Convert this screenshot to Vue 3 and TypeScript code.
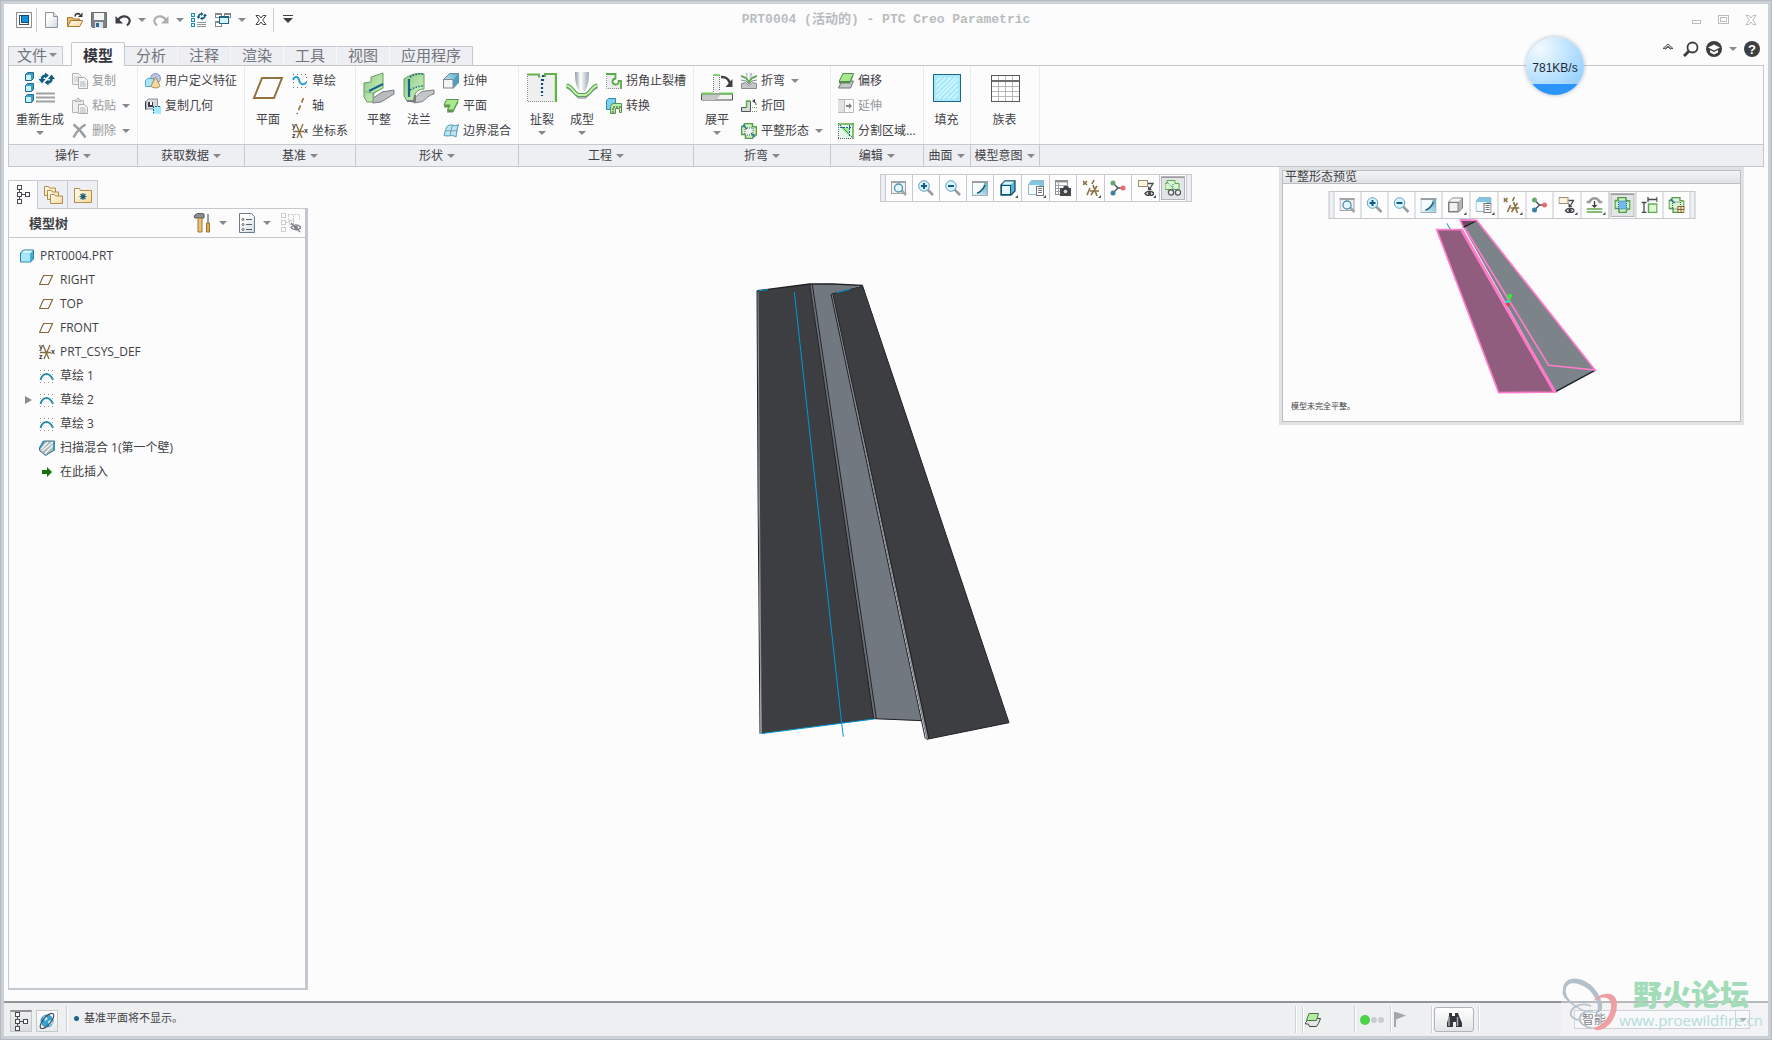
<script setup lang="ts">
import { h, ref } from 'vue'

interface Command {
  icon: string
  label: string
  menu?: boolean
  disabled?: boolean
}

interface Group {
  title: string
  large: Command[]
  small: Command[]
}

interface ViewTool {
  icon: string
  label: string
  menu?: boolean
  active?: boolean
}

interface TreeNode {
  icon: string
  label: string
  root?: boolean
  expandable?: boolean
}

interface Letter {
  text: string
  x: number
  y: number
  size: number
  fill: string
}

const letters: Record<string, Letter[]> = {
  csys: [
    { text: 'y', x: 0, y: 5, size: 7, fill: '#33363a' },
    { text: 'x', x: 12, y: 10, size: 7, fill: '#33363a' },
    { text: 'z', x: 0, y: 15, size: 7, fill: '#33363a' },
  ],
  help: [{ text: '?', x: 4, y: 13, size: 13, fill: '#fff' }],
}

const Icon = (props: { name: string; size?: number }) => {
  const size = props.size ?? 16
  return h('svg', { class: 'icon', width: size, height: size, 'aria-hidden': 'true' }, [
    h('use', { href: `#i-${props.name}`, width: size, height: size }),
    ...(letters[props.name] ?? []).map((l) =>
      h(
        'text',
        { x: l.x, y: l.y, fill: l.fill, 'font-size': l.size, 'font-family': 'Liberation Sans', 'font-weight': 700 },
        l.text,
      ),
    ),
  ])
}
Icon.props = ['name', 'size']

const tabs = ['模型', '分析', '注释', '渲染', '工具', '视图', '应用程序']
const activeTab = ref('模型')

const groups: Group[] = [
  {
    title: '操作',
    large: [{ icon: 'regen-l', label: '重新生成', menu: true }],
    small: [
      { icon: 'copy', label: '复制', disabled: true },
      { icon: 'paste', label: '粘贴', menu: true, disabled: true },
      { icon: 'delete', label: '删除', menu: true, disabled: true },
    ],
  },
  {
    title: '获取数据',
    large: [],
    small: [
      { icon: 'udf', label: '用户定义特征' },
      { icon: 'copygeom', label: '复制几何' },
    ],
  },
  {
    title: '基准',
    large: [{ icon: 'plane-l', label: '平面' }],
    small: [
      { icon: 'sketch', label: '草绘' },
      { icon: 'axis', label: '轴' },
      { icon: 'csys', label: '坐标系' },
    ],
  },
  {
    title: '形状',
    large: [
      { icon: 'flat-l', label: '平整' },
      { icon: 'flange-l', label: '法兰' },
    ],
    small: [
      { icon: 'extrude', label: '拉伸' },
      { icon: 'planar', label: '平面' },
      { icon: 'blend', label: '边界混合' },
    ],
  },
  {
    title: '工程',
    large: [
      { icon: 'rip-l', label: '扯裂', menu: true },
      { icon: 'form-l', label: '成型', menu: true },
    ],
    small: [
      { icon: 'corner', label: '拐角止裂槽' },
      { icon: 'convert', label: '转换' },
    ],
  },
  {
    title: '折弯',
    large: [{ icon: 'unbend-l', label: '展平', menu: true }],
    small: [
      { icon: 'bend', label: '折弯', menu: true },
      { icon: 'bendback', label: '折回' },
      { icon: 'flatpat', label: '平整形态', menu: true },
    ],
  },
  {
    title: '编辑',
    large: [],
    small: [
      { icon: 'offset', label: '偏移' },
      { icon: 'extend', label: '延伸', disabled: true },
      { icon: 'split', label: '分割区域...' },
    ],
  },
  { title: '曲面', large: [{ icon: 'fill-l', label: '填充' }], small: [] },
  { title: '模型意图', large: [{ icon: 'family-l', label: '族表' }], small: [] },
]

const baseTools: ViewTool[] = [
  { icon: 'refit', label: '重新调整' },
  { icon: 'zoomin', label: '放大' },
  { icon: 'zoomout', label: '缩小' },
  { icon: 'repaint', label: '重画' },
]

const viewTools: ViewTool[] = [
  ...baseTools,
  { icon: 'shaded', label: '显示样式', menu: true },
  { icon: 'saved', label: '已保存方向', menu: true },
  { icon: 'viewmgr', label: '视图管理器' },
  { icon: 'datum', label: '基准显示', menu: true },
  { icon: 'spin', label: '旋转中心' },
  { icon: 'annot', label: '注释显示', menu: true },
  { icon: 'flatview', label: '平整形态预览', active: true },
]

const previewTools: ViewTool[] = [
  ...baseTools,
  { icon: 'nohidden', label: '显示样式', menu: true },
  { icon: 'saved', label: '已保存方向', menu: true },
  { icon: 'datum', label: '基准显示', menu: true },
  { icon: 'spin', label: '旋转中心' },
  { icon: 'annot', label: '注释显示', menu: true },
  { icon: 'bendzone', label: '折弯区域', menu: true },
  { icon: 'flatshow', label: '显示平整', active: true },
  { icon: 'measure', label: '尺寸' },
  { icon: 'flattable', label: '平整表' },
]

const tree: TreeNode[] = [
  { icon: 'part', label: 'PRT0004.PRT', root: true },
  { icon: 'plane', label: 'RIGHT' },
  { icon: 'plane', label: 'TOP' },
  { icon: 'plane', label: 'FRONT' },
  { icon: 'csys', label: 'PRT_CSYS_DEF' },
  { icon: 'curve', label: '草绘 1' },
  { icon: 'curve', label: '草绘 2', expandable: true },
  { icon: 'curve', label: '草绘 3' },
  { icon: 'swept', label: '扫描混合 1(第一个壁)' },
  { icon: 'insert', label: '在此插入' },
]

const filter = ref('智能')
</script>

<template>
  <div class="window">
    <svg class="sprite" width="0" height="0" aria-hidden="true">
      <defs>
        <linearGradient id="g-page" x1="0" y1="0" x2="1" y2="1"><stop offset="0.3" stop-color="#fff" /><stop offset="1" stop-color="#cfd8e2" /></linearGradient>
        <linearGradient id="g-folder" x1="0" y1="0" x2="1" y2="1"><stop offset="0" stop-color="#fffdf0" /><stop offset="1" stop-color="#f6d999" /></linearGradient>
        <linearGradient id="g-green" x1="0" y1="0" x2="1" y2="1"><stop offset="0" stop-color="#8fc68a" /><stop offset="1" stop-color="#d3fbbf" /></linearGradient>
        <linearGradient id="g-blue" x1="0" y1="1" x2="1" y2="0"><stop offset="0" stop-color="#eafaff" /><stop offset="1" stop-color="#5aa9c4" /></linearGradient>
        <linearGradient id="g-steel" x1="0" y1="0" x2="1" y2="0"><stop offset="0" stop-color="#8f98a1" /><stop offset="0.4" stop-color="#fff" /><stop offset="1" stop-color="#98a7b6" /></linearGradient>
      </defs>

      <symbol id="i-app" viewBox="0 0 16 16"><rect x="0.500" y="0.500" width="15" height="15" fill="#fff" stroke="#8e8f92" /><rect x="3.500" y="3.500" width="9" height="9" fill="#fff" stroke="#4e5156" /><rect x="5.500" y="3.500" width="7" height="7" fill="#1292dc" stroke="#0a4f7c" /></symbol>
      <symbol id="i-new" viewBox="0 0 16 16"><path d="M2.500 0.500h8l4 4v11h-12z" fill="url(#g-page)" stroke="#8b9299" /><path d="M10.500 0.500v4h4" fill="#e6eaee" stroke="#8b9299" /></symbol>
      <symbol id="i-open" viewBox="0 0 16 16"><path d="M0.500 14.500v-9h5l1 1.500h6v3" fill="#e9bd6d" stroke="#a5792f" /><path d="M0.700 14.500l3-6h12l-3 6z" fill="url(#g-folder)" stroke="#a5792f" /><path d="M8 4.500c0-3 3-3.500 5-2" fill="none" stroke="#33373b" stroke-width="1.600" /><path d="M15.500 0.500v4.500h-4.500z" fill="#33373b" /></symbol>
      <symbol id="i-save" viewBox="0 0 16 16"><path d="M0.500 0.500h15v15h-14l-1-1z" fill="#7d8287" stroke="#6a6e73" /><rect x="3" y="1" width="10" height="7" fill="#f4f6f8" /><rect x="4" y="10" width="8" height="6" fill="#dfe4e8" /><rect x="5" y="11" width="3" height="4" fill="#2d6f91" /></symbol>
      <symbol id="i-undo" viewBox="0 0 16 16"><path d="M3 8c3-4.500 8-4.500 10.500-2 2 2.200 1.500 5-1.500 7.500" fill="none" stroke="#3c3f44" stroke-width="2.200" /><path d="M0.500 4v7.500h7.500z" fill="#3c3f44" /></symbol>
      <symbol id="i-redo" viewBox="0 0 16 16"><path d="M13 8c-3-4.500-8-4.500-10.500-2-2 2.200-1.500 5 1.500 7.500" fill="none" stroke="#adafb2" stroke-width="2.200" /><path d="M15.500 4v7.500h-7.500z" fill="#adafb2" /></symbol>
      <symbol id="i-regen" viewBox="0 0 16 16"><g fill="#c8f2ff" stroke="#2a8ab0"><rect x="0.500" y="1.500" width="3" height="3" /><rect x="0.500" y="6.500" width="3" height="3" /><rect x="0.500" y="11.500" width="3" height="3" /></g><path d="M6 10.500h9M6 12.500h9M6 14.500h9" stroke="#909498" /><path d="M7.500 5c0-2 1-3 3-3M14 3c0 2-1 3.500-3 3.500" fill="none" stroke="#145b80" stroke-width="1.600" /><path d="M10 0v4l2.500-2zM11.500 4.500v4l-2.500-2zM5.500 4.500h4l-2 2.500zM12 4h4l-2-2.500z" fill="#145b80" /></symbol>
      <symbol id="i-windows" viewBox="0 0 16 16"><g fill="#fff" stroke="#85898d"><rect x="0.500" y="1.500" width="6" height="4" /><rect x="0.500" y="9.500" width="6" height="5" /><rect x="9.500" y="1.500" width="6" height="4" /></g><path d="M0.500 2h6M9.500 2h6M0.500 10h6" stroke="#85898d" stroke-width="2" /><rect x="4.500" y="4.500" width="9" height="7" fill="#d7f4ff" stroke="#1d6486" /><path d="M4 5h10" stroke="#1d6486" stroke-width="2" /></symbol>
      <symbol id="i-closebox" viewBox="0 0 16 16"><path d="M3 3.500h3l2 2.500 2-2.500h3l-3.300 4.500 3.300 4.500h-3l-2-2.500-2 2.500h-3l3.300-4.500z" fill="#fff" stroke="#43464a" /></symbol>

      <symbol id="i-regen-l" viewBox="0 0 32 32"><g stroke="#1f6b8d"><path d="M1.500 2.500l2-2h6v6l-2 2h-6zM1.500 13.500l2-2h6v6l-2 2h-6zM1.500 24.500l2-2h6v6l-2 2h-6z" fill="#3f9cc4" /></g><path d="M2 3h5v5h-5zM2 14h5v5h-5zM2 25h5v5h-5z" fill="#c8f4ff" /><path d="M12 21.500h19M12 25.500h19M12 29.500h19" stroke="#9ea1a4" stroke-width="2" /><path d="M18 8c0-3 1-4.500 4-4.500M27.500 6c0 3-1 4.500-4 4.500" fill="none" stroke="#115c82" stroke-width="2.600" /><path d="M21 0.500v6l4-3zM14.500 7h7l-3.500 4.500zM24.500 7.500v6l-4-3zM24 7h7l-3.500-4.500z" fill="#115c82" /></symbol>
      <symbol id="i-copy" viewBox="0 0 16 16"><path d="M0.500 0.500h6l3 3v8h-9z" fill="#f2f2f2" stroke="#b3b5b7" /><path d="M2 4h5M2 6h5M2 8h4" stroke="#c4c5c7" /><path d="M6.500 4.500h6l3 3v8h-9z" fill="#f4f4f4" stroke="#a9abad" /><path d="M8 9h5M8 11h6M8 13h6" stroke="#b3b4b6" /></symbol>
      <symbol id="i-paste" viewBox="0 0 16 16"><path d="M0.500 2.500h11v12h-11z" fill="#eee" stroke="#b3b5b7" /><path d="M3 3.500l2-3h2l2 3z" fill="#ddd" stroke="#b3b5b7" /><path d="M6.500 6.500h6l3 3v6h-9z" fill="#f6f6f6" stroke="#a9abad" /><path d="M8 10h5M8 12h6M8 14h6" stroke="#b3b4b6" /></symbol>
      <symbol id="i-delete" viewBox="0 0 16 16"><path d="M1.500 1.500c4 3 8 7 12 13M13.500 1.500c-5 3-9 7-12 13" fill="none" stroke="#9b9da0" stroke-width="2.400" /></symbol>
      <symbol id="i-udf" viewBox="0 0 16 16"><circle cx="10.500" cy="5.500" r="5" fill="#b7c6ea" stroke="#8393bd" /><path d="M0.500 7.500l2-2h6v6l-2 2h-6z" fill="#a6e6fb" stroke="#5aa8c5" /><path d="M10.500 4l4.500 9c-1 2.500-8 2.500-9 0z" fill="#f4d9a2" stroke="#b08a4c" /></symbol>
      <symbol id="i-copygeom" viewBox="0 0 16 16"><path d="M0.500 3.500l3-2.500h9v7l-3 3h-9z" fill="#d7d9dc" stroke="#8a8e92" /><path d="M0.500 3.500v8" stroke="#3b3f43" stroke-width="1.500" /><rect x="3" y="4" width="5" height="5" fill="#3b3f43" /><rect x="5" y="4" width="2" height="3" fill="#fff" /><rect x="8" y="8" width="8" height="8" fill="#a6e9ff" /><path d="M8.500 8v7M10 8.500h5" stroke="#1d6486" stroke-dasharray="2 1" /></symbol>
      <symbol id="i-plane-l" viewBox="0 0 32 32"><path d="M10 6h20l-8 20h-20z" fill="none" stroke="#8f7340" stroke-width="2" /></symbol>
      <symbol id="i-plane" viewBox="0 0 16 16"><path d="M4.500 3.500h9l-4 9h-9z" fill="none" stroke="#83693b" stroke-width="1.200" /></symbol>
      <symbol id="i-sketch" viewBox="0 0 16 16"><path d="M1 1.500h14M1 14.500h14M1.500 5v7M14.500 4v8" stroke="#6c7074" stroke-dasharray="1 3" /><path d="M1 7c1.500-4 5-4 6 0s3.500 6 7.500 2.500" fill="none" stroke="#2d9fd2" stroke-width="2" /></symbol>
      <symbol id="i-axis" viewBox="0 0 16 16"><path d="M11.500 0L5 16" stroke="#8f7340" stroke-width="1.600" stroke-dasharray="5 3" /></symbol>
      <symbol id="i-csys" viewBox="0 0 16 16"><path d="M1 8.500h11M4 1l6 14M11 1L5 15" stroke="#866d3e" stroke-width="1.300" /></symbol>
      <symbol id="i-flat-l" viewBox="0 0 32 32"><path d="M9 27l10-7 12-2v4l-13 8-8 1z" fill="#b9bcbe" stroke="#797d80" /><path d="M1 11l7-1v-5l12-4v15l-9 5-1 9h-6l-3-5z" fill="url(#g-green)" stroke="#6a9b66" /><path d="M1.500 19c2 1 4 2 8.500 2l10-5M10 21v9" fill="none" stroke="#86b382" stroke-width="1.200" /><path d="M6 19l14-7" stroke="#16638c" stroke-width="2" /></symbol>
      <symbol id="i-flange-l" viewBox="0 0 32 32"><path d="M9 27c5-1 7-8 13-8l9-1v4c-7 1-9 8-14 8l-6 1z" fill="#c4c7c9" stroke="#797d80" /><path d="M1 7c7-5 12-6 20-5v15c-8 0-10 6-11 13l-6-1-3-5z" fill="url(#g-green)" stroke="#6a9b66" /><path d="M6 7v18" stroke="#16638c" stroke-width="2.200" /><path d="M7 5c5-3 9-3.500 14-3M7 18c5-3 9-4 14-4" stroke="#16638c" fill="none" stroke-width="1.500" stroke-dasharray="1.500 1.500" /><path d="M4 29h8v-6" fill="none" stroke="#797d80" stroke-width="2" /></symbol>
      <symbol id="i-extrude" viewBox="0 0 16 16"><path d="M0.500 6.500l6-6h9v9l-5 5.500z" fill="url(#g-blue)" stroke="#6b8c9c" /><path d="M10 7l5.500-6.500v9l-5 5.500z" fill="#4c9fc0" /><rect x="0.500" y="6.500" width="9.500" height="8.500" fill="#f3f4f5" stroke="#84888c" /></symbol>
      <symbol id="i-planar" viewBox="0 0 16 16"><path d="M2 3h13v2l-5 9.500h-6l1-5h-4z" fill="#5c9552" /><path d="M3.500 1.500h12l-5 10.500h-6l2.500-5h-6z" fill="#a6ea8c" stroke="#5c9552" /></symbol>
      <symbol id="i-blend" viewBox="0 0 16 16"><path d="M4.500 3c4-3 7 1.500 11-1.500-1 3-2 8-2.500 12.500-4-3-8 0-12-1.500 1-3 1.500-7 3.500-9.500z" fill="#b8e8f6" stroke="#5196b2" /><path d="M9.500 2c-1 4-2 7-2.500 11M2.500 8c4-1 8 1 12-1" fill="none" stroke="#7f99a5" /></symbol>
      <symbol id="i-rip-l" viewBox="0 0 32 32"><path d="M2 3h28v27h-28z" fill="#efefef" /><path d="M1.500 4v25.500h26" fill="none" stroke="#8e9194" stroke-dasharray="1 1" /><path d="M1 2.500h12v3M19 5v-3h11v28" fill="none" stroke="#62b04f" stroke-width="2" /><path d="M28.500 3v27" stroke="#b5fba0" /><path d="M17 3v6M16 7v17" fill="none" stroke="#104e77" stroke-width="2.200" stroke-dasharray="2 2" /></symbol>
      <symbol id="i-form-l" viewBox="0 0 32 32"><path d="M9 0h14c0 8-1 14-4 19h-6c-3-5-4-11-4-19z" fill="url(#g-steel)" /><path d="M0.500 16c5 1 7 6 12 10h7c5-4 7-9 12-10" fill="none" stroke="#a0a4a8" stroke-width="1.500" /><path d="M0.500 13.500c6 1 7 8 12 9.500h7c5-1.500 6-8.500 12-9.500" fill="none" stroke="#5b9a54" stroke-width="4" /><path d="M0.500 13.500c6 1 7 8 12 9.500h7c5-1.500 6-8.500 12-9.500" fill="none" stroke="#bdf4ad" stroke-width="2" /></symbol>
      <symbol id="i-corner" viewBox="0 0 16 16"><path d="M1 1h8v4c-3 1-3 6 0 6 2 1 4-1 4-3h2v8h-14z" fill="#ececec" /><path d="M0.500 1v14.500h14" fill="none" stroke="#8e9194" stroke-dasharray="1 1" /><path d="M0 1h9.500v4.500c-4.500 1-3.500 6 0 6s3-2 3-3.500h2.500v8" fill="none" stroke="#5cab4a" stroke-width="1.800" /></symbol>
      <symbol id="i-convert" viewBox="0 0 16 16"><path d="M0.500 2.500l2-2h7v8l-2 3h-7z" fill="#79d0f4" stroke="#3189ae" /><path d="M4.500 15.500v-7l2-3h9v9h-2v-4h-4v5z" fill="#b6ef9f" stroke="#5d8f55" /><path d="M7 15v-6h8" fill="none" stroke="#3e4347" stroke-dasharray="2 1" /></symbol>
      <symbol id="i-unbend-l" viewBox="0 0 32 32"><path d="M12.500 20v-16.500h6v15" fill="#f1f1f1" stroke="#6b6f72" stroke-dasharray="1 1" /><path d="M12 3h7" stroke="#70c75c" stroke-width="1.500" /><path d="M0.500 22h31v6h-31z" fill="#f2f2f2" stroke="#4d5054" /><path d="M1 23h18c-1 3-4 5-7 5h-11z" fill="#c5c7c9" /><path d="M0.500 21.500h12M18 21.500h14" stroke="#70c75c" stroke-width="2" /><path d="M20 5c5-0.500 8 3 9 6" fill="none" stroke="#3d4145" stroke-width="2.600" /><path d="M31.500 7v8h-7z" fill="#3d4145" /></symbol>
      <symbol id="i-bend" viewBox="0 0 16 16"><path d="M4.500 0h7l-2 7h-3z" fill="url(#g-steel)" /><path d="M0 3l5 2 3 4 3-4 5-2" fill="none" stroke="#63a957" stroke-width="2" /><path d="M0 7l5 1 3 3 3-3 5-1" fill="none" stroke="#878b8f" /><path d="M0.500 15.500v-5l4-1 3.500 3 3.500-3 4 1v5z" fill="#c4c6c8" stroke="#878b8f" /></symbol>
      <symbol id="i-bendback" viewBox="0 0 16 16"><path d="M0.500 13.500v-4h5l0-6h4v10z" fill="#d7dad7" stroke="#4f5558" /><path d="M5.500 10v-7h4" fill="none" stroke="#60b24d" stroke-width="1.500" /><path d="M11 9.500h5M11 13.500h5" stroke="#5f9955" stroke-dasharray="1 1" /><path d="M12 3c2 0 3 2 3 4" fill="none" stroke="#3d4145" /><path d="M11 3l3-2v4z" fill="#3d4145" /></symbol>
      <symbol id="i-flatpat" viewBox="0 0 16 16"><path d="M3.500 0.500h8v3l4 0.500v8h-3l-1 3.500h-7v-4h-4v-8h3z" fill="#ccefc0" stroke="#549c4c" stroke-width="1.500" /><path d="M4 5h8v7h-8z" fill="#eef4ee" stroke="#4c5e5a" stroke-dasharray="1 1" /><path d="M2 2l4 4M10 10l4 4" stroke="#226fa0" stroke-width="1.400" /></symbol>
      <symbol id="i-offset" viewBox="0 0 16 16"><path d="M4 8h11.500l-3 7h-12z" fill="#c6c8ca" stroke="#6f7376" /><path d="M5 2.500h10.500l-3.500 8h-11.500z" fill="#568b4c" /><path d="M5 0.500h10.500l-3.500 8h-11z" fill="#a4e98a" stroke="#568b4c" /></symbol>
      <symbol id="i-extend" viewBox="0 0 16 16"><rect x="0" y="1" width="6" height="14" fill="#e2e2e3" /><path d="M0 1.500h15.500v13h-15.500M6.500 1v14" fill="none" stroke="#b8babc" /><path d="M8 8h3" stroke="#808386" stroke-width="2" /><path d="M11 5v6l3-3z" fill="#808386" /></symbol>
      <symbol id="i-split" viewBox="0 0 16 16"><rect x="1" y="1" width="14" height="14" fill="#e4f7ef" /><path d="M3 5h8v8z" fill="#a4e98a" /><path d="M0.500 0v16M0 15.500h16" stroke="#55595c" stroke-dasharray="1 1" /><path d="M0 1h16M15 0v16" stroke="#5cab4a" stroke-width="1.500" /><path d="M2 4.500h12M11.500 2v12M2 2l12 12" stroke="#1e6187" fill="none" stroke-dasharray="2 1" /></symbol>
      <symbol id="i-fill-l" viewBox="0 0 32 32"><rect x="2.500" y="2.500" width="27" height="27" fill="#a5e8fb" stroke="#1f6788" /><path d="M5 10L10 5M5 15L15 5M5 20L20 5M5 25L25 5M7 27L27 7M12 27L27 12M17 27L27 17M22 27L27 22" stroke="#d5f7ff" stroke-width="1.500" /></symbol>
      <symbol id="i-family-l" viewBox="0 0 32 32"><rect x="2.500" y="3.500" width="28" height="26" fill="#fff" stroke="#55585c" /><path d="M9.500 4v25M16.500 4v25M23.500 4v25M3 14.500h27M3 19.500h27M3 24.500h27" stroke="#b6b8ba" /><path d="M3 9h27" stroke="#6c6f72" stroke-width="2" /></symbol>

      <symbol id="i-treetab" viewBox="0 0 16 20"><g fill="#fff" stroke="#484b4f"><path d="M4.500 5v10M6 9.500h4" /><rect x="2.500" y="0.500" width="4" height="4" /><rect x="2.500" y="7.500" width="4" height="4" /><rect x="2.500" y="14.500" width="4" height="4" /><rect x="10.500" y="7.500" width="4" height="4" /></g></symbol>
      <symbol id="i-folders" viewBox="0 0 20 20"><g fill="url(#g-folder)" stroke="#b08d4f"><path d="M1.500 10.500v-9h4l1 1.500h6v7.500z" /><path d="M4.500 14.500v-9h4l1 1.500h6v7.500z" /><path d="M7.500 18.500v-9h4l1 1.500h7v7.500z" /></g></symbol>
      <symbol id="i-favorite" viewBox="0 0 20 20"><path d="M1.500 17.500v-14h5l1 2h11v12z" fill="url(#g-folder)" stroke="#b08d4f" /><path d="M10 8v7M6.500 11.500h7M7.500 9l5 5M12.500 9l-5 5" stroke="#165d7c" stroke-width="1.200" /></symbol>
      <symbol id="i-tools" viewBox="0 0 20 20"><path d="M2 2c2-2 6-2 9-1v4h-9l-1-1z" fill="#8a8f96" stroke="#55585e" /><path d="M5 5h4v14h-4z" fill="#e8c47c" stroke="#9c7433" /><path d="M15 1v9" stroke="#7d8288" stroke-width="1.500" /><path d="M13.500 10h3v9h-3z" fill="#e1a64f" stroke="#9c7433" /></symbol>
      <symbol id="i-list" viewBox="0 0 20 20"><path d="M2.500 0.500h12l3 3v16h-15z" fill="url(#g-page)" stroke="#6e7d8c" /><path d="M9 6.500h6M9 11.500h6M9 16.500h6" stroke="#5b6066" /><g fill="#fff" stroke="#5b6066"><circle cx="6" cy="6.500" r="1" /><circle cx="6" cy="11.500" r="1" /><circle cx="6" cy="16.500" r="1" /></g></symbol>
      <symbol id="i-treehide" viewBox="0 0 20 20"><g fill="#fff" stroke="#cbcdcf"><rect x="0.500" y="0.500" width="4" height="4" /><rect x="0.500" y="7.500" width="4" height="4" /><rect x="0.500" y="14.500" width="4" height="4" /><path d="M5 9.500h4M7.500 2v7M7 1.500h12M12.500 2v5M18.500 2v6" stroke-dasharray="2 1" /><rect x="8.500" y="7.500" width="4" height="4" /></g><path d="M10 14.500c3-3.500 7-3.500 10 0-3 3-7 3-10 0zM10 10l9 9" fill="none" stroke="#7e8184" stroke-width="1.300" /><circle cx="15" cy="14.500" r="2" fill="#7e8184" /></symbol>
      <symbol id="i-part" viewBox="0 0 16 16"><path d="M1.500 5l3-3h10v9l-3 3h-10z" fill="#43b0d6" stroke="#2d7f9c" /><path d="M2 5.500l3-3h9l-3 3z" fill="#d8f7ff" /><rect x="2" y="5.500" width="9" height="8" fill="#a8e8fb" /></symbol>
      <symbol id="i-curve" viewBox="0 0 16 16"><path d="M1 2.500h14M1 14.500h14M1.500 6v6M13.500 6v6" stroke="#8a8d90" stroke-dasharray="1 3" /><path d="M1.500 12c1-3.500 3-6 6-6s5 2.500 6.500 6" fill="none" stroke="#2b8bb5" stroke-width="1.900" /></symbol>
      <symbol id="i-swept" viewBox="0 0 16 16"><path d="M0.500 8l4-7h11v9l-9 5.500-6-5z" fill="#aeb6ba" stroke="#35718b" /><path d="M3 11L14 2M6 13.500L14.500 5M2 9l7-7" stroke="#f5f6f6" stroke-width="1.400" /><path d="M1 8l3.500-6.500M15 1.500v9" fill="none" stroke="#2e97c2" stroke-width="1.800" /></symbol>
      <symbol id="i-insert" viewBox="0 0 16 16"><path d="M3 6h5v-3l5 5-5 5v-3h-5z" fill="#15720d" /></symbol>

      <symbol id="i-refit" viewBox="0 0 16 16"><rect x="0.500" y="1.500" width="14" height="12" fill="#f1f1f2" stroke="#a2a4a7" /><path d="M0 2h15" stroke="#a2a4a7" stroke-width="2" /><path d="M10 10l5 5" stroke="#a3a5a7" stroke-width="2.500" /><circle cx="7.500" cy="8" r="4" fill="#e2f7ff" stroke="#4f90ac" stroke-width="1.300" /></symbol>
      <symbol id="i-zoomin" viewBox="0 0 16 16"><path d="M9 9l6 6" stroke="#999c9f" stroke-width="2.500" /><circle cx="6" cy="6" r="5.300" fill="#d4f3ff" stroke="#67a3bc" /><path d="M6 3v6M3 6h6" stroke="#105f83" stroke-width="2" /></symbol>
      <symbol id="i-zoomout" viewBox="0 0 16 16"><path d="M9 9l6 6" stroke="#999c9f" stroke-width="2.500" /><circle cx="6" cy="6" r="5.300" fill="#d4f3ff" stroke="#67a3bc" /><path d="M3 6h6" stroke="#105f83" stroke-width="2" /></symbol>
      <symbol id="i-repaint" viewBox="0 0 16 16"><rect x="0.500" y="1.500" width="15" height="14" fill="url(#g-blue)" stroke="#a3adb3" /><path d="M0 2h16" stroke="#98a0a5" stroke-width="2" /><path d="M1 3h11c0 5-4 9-8 10l-3 1z" fill="#f4fcff" /><path d="M5 13c2 0 6-3 8-8" fill="none" stroke="#1e5c7b" stroke-width="1.500" /></symbol>
      <symbol id="i-shaded" viewBox="0 0 16 16"><path d="M1 5l4-4h10v10l-4 4h-10z" fill="#5fb2d0" stroke="#125070" stroke-width="1.300" /><path d="M2 4.500l3-3h9l-3 3z" fill="#d4f5ff" /><rect x="1.500" y="5.500" width="9" height="9" fill="#e4faff" stroke="#125070" /></symbol>
      <symbol id="i-nohidden" viewBox="0 0 16 16"><path d="M1 5l4-4h10v10l-4 4h-10z" fill="#b5b5b6" stroke="#7e8082" /><path d="M2 4.500l3-3h9l-3 3z" fill="#f5f5f5" /><rect x="1.500" y="5.500" width="9" height="9" fill="#f1f1f1" stroke="#7e8082" /></symbol>
      <symbol id="i-saved" viewBox="0 0 16 16"><path d="M0.500 4.500l3-4h12v9l-4 5h-11z" fill="#7fc6e2" stroke="#9ab7c4" /><path d="M1 5h10v9h-10z" fill="#f3fafc" /><rect x="8.500" y="6.500" width="7" height="9" fill="#fff" stroke="#727578" /><path d="M10 8.500h4M10 10.500h4M10 12.500h4" stroke="#727578" /></symbol>
      <symbol id="i-viewmgr" viewBox="0 0 16 16"><rect x="0.500" y="0.500" width="12" height="14" fill="#fff" stroke="#8d9093" /><path d="M0 1.500h13" stroke="#8d9093" stroke-width="2" /><path d="M3.500 3v11M1 5.500h12M1 8.500h12M1 11.500h8" stroke="#a2a5a8" /><path d="M5 8h3l1-2h4l1 2h2v8h-11z" fill="#46484b" /><circle cx="10.500" cy="11.500" r="2.500" fill="#cfd3d7" stroke="#222" /></symbol>
      <symbol id="i-datum" viewBox="0 0 16 16"><path d="M0 1l4 4M4 1L0 5M11 0L9 4M7 8L4 15M10 5l4 11M14 6L8 15M7 11h9" stroke="#8a7144" stroke-width="1.600" /></symbol>
      <symbol id="i-spin" viewBox="0 0 16 16"><path d="M3 3l5 5 6 0M8 8l-5 5" fill="none" stroke="#47505a" stroke-width="1.400" /><circle cx="3" cy="3" r="2.500" fill="#68a971" /><circle cx="13" cy="8" r="2.500" fill="#e86c6c" /><circle cx="3" cy="13" r="2.500" fill="#3a80a3" /></symbol>
      <symbol id="i-annot" viewBox="0 0 16 16"><rect x="0.500" y="0.500" width="9" height="6" fill="#fff5dc" stroke="#988e78" /><path d="M10 3.500h5l-3 5" fill="none" stroke="#44474a" stroke-width="1.300" /><path d="M10 6v4h4z" fill="#44474a" /><path d="M7 13.500c2-3 7-3 9 0-2 3-7 3-9 0z" fill="#fff" stroke="#44474a" stroke-width="1.400" /><circle cx="11.500" cy="13.500" r="1.700" fill="#44474a" /></symbol>
      <symbol id="i-flatview" viewBox="0 0 16 16"><path d="M2 0.500h8v3h4v6h-14v-6h2z" fill="#d5f5ca" stroke="#5fa855" /><path d="M2 2l6 6M8 4v5" stroke="#317da6" stroke-dasharray="1 1" /><circle cx="6" cy="12.500" r="2.600" fill="#eee" stroke="#55585a" stroke-width="1.300" /><circle cx="13" cy="12.500" r="2.600" fill="#eee" stroke="#55585a" stroke-width="1.300" /></symbol>
      <symbol id="i-bendzone" viewBox="0 0 16 16"><path d="M0 5h3c2-5 8-5 10 0h3" fill="none" stroke="#9a9d9f" stroke-width="2.500" /><path d="M8 4v5" stroke="#3c3f42" stroke-width="1.300" /><path d="M5 8h6l-3 3z" fill="#3c3f42" /><path d="M0 12h16M0 15h16" stroke="#5fa552" stroke-width="1.500" /></symbol>
      <symbol id="i-flatshow" viewBox="0 0 16 16"><path d="M3.500 0.500h8v3l4 0.500v8h-3l-1 3.500h-7v-4h-4v-8h3z" fill="#c9f1be" stroke="#549c4c" stroke-width="1.500" /><rect x="4" y="4" width="8" height="8" fill="#72b9ee" stroke="#2c709e" stroke-dasharray="1 1" /></symbol>
      <symbol id="i-measure" viewBox="0 0 16 16"><path d="M6 2.500h9M6.500 0v5M15.500 0v5M2.500 6v9M0 5.500h5M0 15.500h5" stroke="#45484b" stroke-width="1.300" /><rect x="7" y="7" width="8.500" height="8.500" fill="#dcf7d3" stroke="#5fa552" stroke-width="1.400" /></symbol>
      <symbol id="i-flattable" viewBox="0 0 16 16"><path d="M3.500 0.500h8v3l4 0.500v8h-3l-1 3.500h-7v-4h-4v-8h3z" fill="#dbf2d2" stroke="#549c4c" stroke-width="1.300" /><path d="M4 5h8v7h-8z" fill="none" stroke="#4c5e5a" stroke-dasharray="1 1" /><path d="M2 2l4 4" stroke="#226fa0" stroke-width="1.400" /><rect x="9.500" y="9.500" width="6" height="6" fill="#fce9bf" stroke="#806536" /><path d="M9 12.500h7M12.500 10v6" stroke="#806536" /></symbol>

      <symbol id="i-search" viewBox="0 0 16 16"><path d="M6 10l-5 5" stroke="#3c3e42" stroke-width="3" /><circle cx="9.500" cy="6.500" r="5" fill="#fff" stroke="#3c3e42" stroke-width="1.800" /></symbol>
      <symbol id="i-learn" viewBox="0 0 16 16"><circle cx="8" cy="8" r="8" fill="#3c3e42" /><path d="M2 6.500l6-3 6 3-6 3zM4 9l4 2 4-2v2.500l-4 2-4-2z" fill="#fff" /></symbol>
      <symbol id="i-help" viewBox="0 0 16 16"><circle cx="8" cy="8" r="8" fill="#3c3e42" /></symbol>
      <symbol id="i-collapse" viewBox="0 0 16 16"><path d="M3 7.500l5-4.500 5 4.500h-2l-3-2.500-3 2.500zM5 8.500l3-2.500 3 2.500" fill="#fff" stroke="#505357" /></symbol>
      <symbol id="i-min" viewBox="0 0 16 16"><rect x="3.500" y="8.500" width="8" height="3" fill="#fff" stroke="#b9bbbe" /></symbol>
      <symbol id="i-max" viewBox="0 0 16 16"><rect x="2.500" y="3.500" width="10" height="8" fill="#fff" stroke="#b9bbbe" /><rect x="4.500" y="5.500" width="6" height="4" fill="#fff" stroke="#b9bbbe" /></symbol>
      <symbol id="i-close" viewBox="0 0 16 16"><path d="M3 3.500h3l2 2.500 2-2.500h3l-3.300 4.500 3.300 4.500h-3l-2-2.500-2 2.500h-3l3.300-4.500z" fill="#fff" stroke="#b9bbbe" /></symbol>

      <symbol id="i-globe" viewBox="0 0 16 16"><circle cx="8" cy="8" r="6.500" fill="#37a0d0" /><path d="M4 4l3-1 2 3-3 2zM9 8l4-1 1 3-4 3z" fill="#bfe8f7" /><ellipse cx="8" cy="8" rx="9.500" ry="3.800" fill="none" stroke="#4a5158" stroke-width="1.200" transform="rotate(-50 8 8)" /></symbol>
      <symbol id="i-region" viewBox="0 0 16 16"><path d="M0.500 10.500l4-4h11l-2 5-2 3h-7l-1-2.500h-3z" fill="#e4e7e4" stroke="#3f4a42" /><path d="M4 1.500h9.500l-2 7h-10z" fill="#b4eda0" stroke="#47784a" /></symbol>
      <symbol id="i-flag" viewBox="0 0 16 16"><path d="M2 0v15" stroke="#a4a7aa" stroke-width="2" /><path d="M3 0l10 3.500-10 4z" fill="#a4a7aa" /></symbol>
      <symbol id="i-find" viewBox="0 0 18 16"><path d="M4 1h3v3h3v-3h3l1 3 3 7v4h-6v-5h-3v5h-6v-4l2-7z" fill="#33363a" /><path d="M4 5v9M12.500 5v9" stroke="#a9acb0" stroke-width="1.500" /></symbol>
    </svg>

    <header class="titlebar">
      <div class="quick">
        <button class="q" aria-label="窗口"><Icon name="app" /></button>
        <span class="sep"></span>
        <button class="q" aria-label="新建"><Icon name="new" /></button>
        <button class="q" aria-label="打开"><Icon name="open" /></button>
        <button class="q" aria-label="保存"><Icon name="save" /></button>
        <button class="q" aria-label="撤消"><Icon name="undo" /></button>
        <button class="q narrow" aria-label="撤消列表"><i class="caret"></i></button>
        <button class="q" aria-label="重做"><Icon name="redo" /></button>
        <button class="q narrow" aria-label="重做列表"><i class="caret"></i></button>
        <button class="q" aria-label="重新生成"><Icon name="regen" /></button>
        <button class="q" aria-label="窗口列表"><Icon name="windows" /></button>
        <button class="q narrow" aria-label="更多窗口"><i class="caret"></i></button>
        <button class="q" aria-label="关闭窗口"><Icon name="closebox" /></button>
        <span class="sep"></span>
        <button class="q" aria-label="自定义"><i class="caret barred"></i></button>
      </div>
      <h1 class="title">PRT0004 (活动的) - PTC Creo Parametric</h1>
      <div class="winctl">
        <button aria-label="最小化"><Icon name="min" /></button>
        <button aria-label="还原"><Icon name="max" /></button>
        <button aria-label="关闭"><Icon name="close" /></button>
      </div>
    </header>

    <nav class="tabs">
      <button class="tab file">文件<i class="caret"></i></button>
      <button
        v-for="t in tabs"
        :key="t"
        class="tab"
        :class="{ on: t === activeTab }"
        @click="activeTab = t"
      >{{ t }}</button>
      <div class="help">
        <button aria-label="收起功能区"><Icon name="collapse" /></button>
        <button aria-label="搜索"><Icon name="search" /></button>
        <button aria-label="学习"><Icon name="learn" /></button>
        <button aria-label="更多学习"><i class="caret"></i></button>
        <button aria-label="帮助"><Icon name="help" /></button>
      </div>
    </nav>

    <section class="ribbon">
      <div v-for="g in groups" :key="g.title" class="group">
        <div class="body">
          <button v-for="c in g.large" :key="c.label" class="large">
            <Icon :name="c.icon" :size="32" />
            <span>{{ c.label }}</span>
            <i v-if="c.menu" class="caret"></i>
          </button>
          <div v-if="g.small.length" class="column">
            <button v-for="c in g.small" :key="c.label" class="small" :disabled="c.disabled">
              <Icon :name="c.icon" />
              <span>{{ c.label }}</span>
              <i v-if="c.menu" class="caret"></i>
            </button>
          </div>
        </div>
        <button class="name">{{ g.title }}<i class="caret"></i></button>
      </div>
      <div class="group rest"><div class="body"></div><div class="name"></div></div>
    </section>

    <main class="work">
      <aside class="side">
        <div class="sidetabs">
          <button class="on" aria-label="模型树"><svg class="icon" width="16" height="20"><use href="#i-treetab" width="16" height="20" /></svg></button>
          <button aria-label="文件夹浏览器"><Icon name="folders" :size="20" /></button>
          <button aria-label="收藏夹"><Icon name="favorite" :size="20" /></button>
        </div>
        <div class="panel">
          <div class="panelhead">
            <h2>模型树</h2>
            <button aria-label="设置"><Icon name="tools" :size="20" /><i class="caret"></i></button>
            <button aria-label="显示"><Icon name="list" :size="20" /><i class="caret"></i></button>
            <button aria-label="隐藏树"><Icon name="treehide" :size="20" /></button>
          </div>
          <ul class="tree">
            <li v-for="n in tree" :key="n.label" :class="{ root: n.root }">
              <span class="twist"><i v-if="n.expandable"></i></span>
              <Icon :name="n.icon" />
              <span>{{ n.label }}</span>
            </li>
          </ul>
        </div>
      </aside>

      <section class="canvas">
        <div class="viewbar">
          <button
            v-for="t in viewTools"
            :key="t.icon"
            :class="{ active: t.active, menu: t.menu }"
            :aria-label="t.label"
          ><Icon :name="t.icon" /></button>
        </div>

        <svg class="model" viewBox="0 0 870 1440" width="290" height="480" role="img" aria-label="PRT0004">
          <polygon points="209,42 278,41 368,46 275,72 545,1352 403,1347" fill="#717880" />
          <polygon points="52,62 209,42 403,1347 64,1391 56,655" fill="#3c3e42" />
          <polygon points="275,72 368,48 807,1358 560,1408" fill="#3c3e42" />
          <path d="M54 66L58 655L64 1391" fill="none" stroke="#8b939b" stroke-width="3" />
          <path d="M51 62L54 655L60 1391" fill="none" stroke="#222226" stroke-width="3" />
          <path d="M52 62L209 42L278 42L368 46" fill="none" stroke="#222226" stroke-width="4" />
          <path d="M213 46L405 1346" fill="none" stroke="#6b7178" stroke-width="4" />
          <path d="M209 42L401 1347M217 44L409 1345M403 1346L545 1352" fill="none" stroke="#222226" stroke-width="3" />
          <path d="M277 74L563 1408" fill="none" stroke="#8e959c" stroke-width="4" />
          <path d="M273 72L556 1406M279 74L567 1406M275 72L368 48L807 1358L560 1408" fill="none" stroke="#222226" stroke-width="3" />
          <path d="M163 66L305 1360L310 1400M64 1391L403 1347M56 62L84 59M290 68L330 58" fill="none" stroke="#0098d4" stroke-width="3" />
        </svg>

        <section class="preview">
          <div class="frame">
            <h2>平整形态预览</h2>
            <div class="stage">
              <svg viewBox="39 72 1371 711" width="457" height="237" role="img" aria-label="平整形态">
                <polygon points="570,178 620,180 580,202" fill="#6f4a63" />
                <polygon points="620,183 580,202 857,696 975,630" fill="#7c8389" />
                <polygon points="500,209 577,209 857,697 686,697" fill="#905d7f" />
                <path d="M580 202L618 183" stroke="#16181b" stroke-width="4" />
                <path d="M857 695L975 631" stroke="#16222b" stroke-width="4" />
                <path d="M570 178L580 202M570 180L620 181L975 630L836 616L584 203" fill="none" stroke="#ff7bcb" stroke-width="5" />
                <path d="M500 209H577L857 696L686 698Z" fill="none" stroke="#ff7bcb" stroke-width="5" />
                <path d="M574 211L852 696" stroke="#ff7bcb" stroke-width="6" />
                <path d="M531 190L540 207" stroke="#0098d4" stroke-width="3" />
                <path d="M719 410v16" stroke="#32e93a" stroke-width="6" />
                <circle cx="719" cy="408" r="7" fill="#32e93a" />
                <path d="M706 430h14l-5 12z" fill="#f03535" />
                <path d="M707 422h12v6h-12z" fill="#32e3ea" />
              </svg>
              <div class="viewbar">
                <button
                  v-for="t in previewTools"
                  :key="t.icon"
                  :class="{ active: t.active, menu: t.menu }"
                  :aria-label="t.label"
                ><Icon :name="t.icon" /></button>
              </div>
              <p>模型未完全平整。</p>
            </div>
          </div>
        </section>
      </section>
    </main>

    <footer class="status">
      <button class="sq pressed" aria-label="模型树"><svg class="icon" width="16" height="20"><use href="#i-treetab" width="16" height="20" /></svg></button>
      <button class="sq" aria-label="浏览器"><Icon name="globe" /></button>
      <span class="bar"></span>
      <p class="message">基准平面将不显示。</p>
      <span class="bar"></span>
      <span class="bar"></span>
      <div class="cell"><Icon name="region" /></div>
      <span class="bar"></span>
      <div class="lights"><b></b><i></i><i></i></div>
      <span class="bar"></span>
      <div class="cell flag"><Icon name="flag" /></div>
      <span class="bar"></span>
      <button class="find" aria-label="查找"><svg class="icon" width="18" height="16"><use href="#i-find" width="18" height="16" /></svg></button>
      <span class="bar"></span>
      <label class="filter">
        <select v-model="filter" aria-label="选择过滤器"><option>智能</option></select>
        <span class="drop"><i class="caret"></i></span>
      </label>
    </footer>

    <div class="speed">781KB/s</div>

    <div class="mark">
      <svg width="60" height="60" viewBox="0 0 60 60" aria-hidden="true">
        <path fill-rule="evenodd" d="M2 12C3 0 18-2 30 8s15 25 10 28S22 37 12 29 1 19 2 12zM5 13c-1 6 4 12 11 17s18 9 21 5-1-16-10-23S6 4 5 13z" fill="#b3bfca" />
        <path d="M33 25C40 16 54 14 57 24C60 40 48 56 36 55L32 52C42 53 54 38 51 26C48 19 40 21 33 25z" fill="#ee9fa3" />
        <path d="M31 30c-8-4-21 0-21 8 0 4 6 7 11 6M33 35c-6-1-13 2-14 8 0 5 7 9 13 10" fill="none" stroke="#b9c4cd" stroke-width="2" />
      </svg>
      <div class="words">
        <strong>野火论坛</strong>
        <span>www.proewildfire.cn</span>
      </div>
    </div>
  </div>
</template>

<style>
body {
  margin: 0;
}
</style>

<style scoped>
.window {
  position: relative;
  box-sizing: border-box;
  min-height: 100vh;
  display: flex;
  flex-direction: column;
  border: 1px solid #b5bac0;
  background: #fcfcfc;
  box-shadow: inset 0 0 0 3px #cad0d6;
  padding: 3px;
  font-family: 'Open Sans', 'Noto Sans CJK SC', sans-serif;
  font-size: 12px;
  line-height: 16px;
  color: #3f4146;
  overflow: hidden;
}
.sprite {
  position: absolute;
}
button {
  font: inherit;
  color: inherit;
  background: none;
  border: 0;
  padding: 0;
  margin: 0;
  display: flex;
  align-items: center;
  justify-content: center;
}
h1,
h2,
p,
ul {
  margin: 0;
  padding: 0;
  font-size: 12px;
  font-weight: 400;
}
.icon,
.window :deep(.icon) {
  display: block;
  flex: none;
  overflow: visible;
}
.caret {
  flex: none;
  width: 0;
  height: 0;
  border: 4px solid transparent;
  border-top-color: #86888b;
  border-bottom-width: 0;
}

.titlebar {
  display: grid;
  grid-template-columns: 1fr auto 1fr;
  align-items: center;
  height: 32px;
}
.quick {
  display: flex;
  align-items: center;
  padding-left: 8px;
}
.q {
  width: 24px;
  height: 24px;
}
.q.narrow {
  width: 14px;
}
.sep {
  width: 1px;
  height: 24px;
  margin-right: 2px;
  background: #c9ccd0;
}
.barred {
  position: relative;
  border-top-color: #3c3f43;
  border-width: 5px 5px 0;
}
.barred::before {
  content: '';
  position: absolute;
  left: -5px;
  top: -8px;
  width: 10px;
  height: 1px;
  background: #3c3f43;
}
.title {
  font-family: 'Liberation Mono', 'Noto Sans CJK SC', monospace;
  font-size: 13px;
  font-weight: 700;
  color: #b9bcbf;
}
.winctl {
  display: flex;
  justify-content: flex-end;
  gap: 11px;
  padding-right: 9px;
}

.tabs {
  display: flex;
  align-items: flex-end;
  height: 29px;
  padding: 0 4px;
}
.tab {
  position: relative;
  box-sizing: border-box;
  height: 19px;
  padding: 0 11px 2px;
  border: 1px solid #c6cad0;
  border-left-width: 0;
  border-right-color: #f8f8f9;
  border-bottom: 0;
  background: #eeeff2;
  color: #73747d;
  font-size: 15px;
  line-height: 16px;
}
.tab:last-of-type {
  border-right-color: #c6cad0;
}
.tab.file {
  border: 1px solid #c6cad0;
  border-bottom: 0;
  padding: 0 5px 2px 8px;
  gap: 2px;
  margin-right: 8px;
}
.tab.on {
  height: 24px;
  margin-bottom: -1px;
  padding: 0 11px;
  z-index: 1;
  border: 1px solid #c6cad0;
  border-bottom: 0;
  border-radius: 2px 2px 0 0;
  background: #fcfcfc;
  color: #33353a;
  font-weight: 700;
}
.help {
  display: flex;
  align-self: flex-start;
  align-items: center;
  gap: 7px;
  height: 26px;
  margin-left: auto;
  padding-right: 4px;
}

.ribbon {
  display: flex;
  margin: 0 4px;
  border: 1px solid #c4c8cc;
}
.group {
  display: flex;
  flex-direction: column;
}
.body {
  display: flex;
  align-items: flex-start;
  justify-content: center;
  gap: 8px;
  height: 78px;
  padding: 0 7px;
  border-right: 1px solid #ebecee;
}
.group .name {
  box-sizing: border-box;
  width: 100%;
  height: 22px;
  padding: 0 4px;
  gap: 4px;
  border-top: 1px solid #c6cad0;
  border-right: 1px solid #c6cad0;
  background: #eeeff2;
}
.rest {
  flex: 1;
}
.rest .body,
.rest .name {
  border-right: 0;
}
.large {
  flex-direction: column;
  justify-content: flex-start;
  min-width: 32px;
  padding-top: 6px;
}
.large span {
  margin-top: 8px;
}
.large .caret {
  margin-top: 3px;
}
.column {
  padding-top: 2px;
}
.small {
  height: 25px;
  gap: 4px;
  white-space: nowrap;
}
.small .caret {
  margin-left: 2px;
}
.small:disabled {
  color: #97999c;
}

.work {
  flex: 1;
  display: flex;
  min-height: 0;
}
.side {
  width: 300px;
  flex: none;
  margin: 13px 0 11px 4px;
  display: flex;
  flex-direction: column;
}
.sidetabs {
  display: flex;
}
.sidetabs button {
  position: relative;
  width: 30px;
  height: 28px;
  border: 1px solid #c6cad0;
  border-bottom: 0;
  border-left-width: 0;
  background: #eeeff2;
}
.sidetabs .on {
  height: 29px;
  margin-bottom: -1px;
  border-left-width: 1px;
  background: #fcfcfc;
}
.panel {
  flex: 1;
  border: 1px solid #c6cad0;
  border-right: 3px solid #c4c9cf;
  border-bottom: 2px solid #c4c9cf;
}
.panelhead {
  display: flex;
  align-items: center;
  gap: 10px;
  height: 28px;
  padding: 0 4px 0 20px;
  border-bottom: 1px solid #c6cad0;
}
.panelhead h2 {
  margin-right: auto;
  font-size: 13px;
  font-weight: 700;
}
.panelhead button {
  gap: 6px;
}
.tree {
  list-style: none;
  padding-top: 6px;
}
.tree li {
  display: flex;
  align-items: center;
  gap: 5px;
  height: 24px;
  padding-left: 14px;
}
.tree .root {
  padding-left: 10px;
}
.tree .root .twist {
  display: none;
}
.twist {
  width: 11px;
}
.twist i {
  display: block;
  width: 0;
  height: 0;
  border: 4px solid transparent;
  border-left: 7px solid #8a8d90;
  border-right: 0;
  margin-left: 2px;
}

.canvas {
  position: relative;
  flex: 1;
  margin-right: 4px;
}
.viewbar {
  position: absolute;
  top: 7px;
  left: 50%;
  transform: translateX(-50%);
  display: flex;
  box-sizing: border-box;
  height: 28px;
  padding: 0 4px;
  border: 1px solid #c6cad0;
  background: #eeeff2;
}
.viewbar button {
  position: relative;
  width: 27px;
  box-sizing: border-box;
  border-left: 1px solid #c6cad0;
  background: #fdfdfd;
}
.viewbar button.menu {
  width: 28px;
}
.viewbar button:last-child {
  width: 28px;
  border-right: 1px solid #c6cad0;
}
.viewbar .menu::after {
  content: '';
  position: absolute;
  right: 3px;
  bottom: 3px;
  border-style: solid;
  border-width: 0 0 3px 3px;
  border-color: transparent transparent #4b4e52 transparent;
}
.viewbar .active {
  background: #e3e4e6;
  box-shadow: inset 0 0 0 1px #fdfdfd, inset 0 0 0 2px #b4b6b9, inset 0 3px 0 #9a9c9f;
}
.model {
  position: absolute;
  left: 432px;
  top: 103px;
}
.preview {
  position: absolute;
  top: 0;
  right: 20px;
  padding: 3px;
  background: #e0e2e4;
}
.frame {
  border: 1px solid #bcbfc2;
  background: #fcfcfc;
}
.frame h2 {
  height: 12px;
  padding-left: 2px;
  line-height: 12px;
  background: linear-gradient(#f3f4f5, #dfe1e3);
  border-bottom: 1px solid #bcbfc2;
}
.stage {
  position: relative;
}
.stage svg {
  display: block;
}
.stage .viewbar {
  top: 7px;
}
.stage p {
  position: absolute;
  left: 8px;
  bottom: 6px;
  font-family: 'Liberation Serif', 'Noto Sans CJK SC', serif;
  font-size: 8px;
}

.status {
  display: flex;
  align-items: center;
  height: 33px;
  border-top: 2px solid #949597;
  padding: 0 18px 0 6px;
  background: #eeeff1;
}
.sq {
  box-sizing: border-box;
  width: 22px;
  height: 22px;
  margin: 3px 4px 0 0;
  border: 1px solid #c5c8cb;
  background: linear-gradient(#fff, #e8e9eb);
}
.sq.pressed {
  border-top: 2px solid #8f9194;
  background: linear-gradient(#eee, #dcdddf);
}
.bar {
  width: 1px;
  height: 27px;
  margin: 0 2px 0 4px;
  background: #cfd1d4;
  box-shadow: 1px 0 #fff;
}
.message {
  display: flex;
  align-items: center;
  gap: 5px;
  margin-right: auto;
  padding: 0 0 3px 5px;
  font-size: 11px;
}
.message::before {
  content: '';
  width: 5px;
  height: 5px;
  border-radius: 50%;
  background: #17648b;
}
.cell {
  width: 45px;
}
.cell.flag {
  width: 34px;
}
.lights {
  display: flex;
  align-items: center;
  gap: 1px;
  width: 26px;
  padding-left: 3px;
}
.lights b {
  width: 10px;
  height: 10px;
  border-radius: 50%;
  background: #48d348;
}
.lights i {
  width: 6px;
  height: 6px;
  border-radius: 50%;
  background: #cbcccd;
}
.find {
  box-sizing: border-box;
  width: 40px;
  height: 25px;
  border: 1px solid #b1b3b6;
  border-radius: 3px;
  background: linear-gradient(#fff, #e3e4e6);
}
.filter {
  position: relative;
  margin-left: 93px;
}
.filter select {
  appearance: none;
  display: block;
  box-sizing: border-box;
  width: 176px;
  height: 19px;
  padding: 0 7px;
  border: 1px solid #b9bcbf;
  border-radius: 0;
  background: #f5f6f7;
  color: inherit;
  font: inherit;
}
.drop {
  position: absolute;
  top: 1px;
  right: 1px;
  bottom: 1px;
  width: 13px;
  display: flex;
  align-items: center;
  justify-content: center;
  border-left: 1px solid #b9bcbf;
  pointer-events: none;
}

.speed {
  position: absolute;
  top: 36px;
  right: 187px;
  width: 58px;
  height: 58px;
  border-radius: 50%;
  text-align: center;
  line-height: 62px;
  font-family: 'Liberation Sans', sans-serif;
  font-size: 12px;
  color: #1d2733;
  background:
    linear-gradient(transparent 47px, #2b95fb 47px),
    radial-gradient(circle at 25% 20%, #f2faff, #b8e0ff 50%, #7cc6ff);
  box-shadow: 0 0 4px #a9b4bf;
}
.mark {
  position: absolute;
  right: 3px;
  bottom: 3px;
  display: flex;
  width: 207px;
  height: 60px;
  background: rgba(252, 252, 252, 0.35);
  pointer-events: none;
}
.words {
  display: flex;
  flex-direction: column;
  align-items: flex-end;
  flex: 1;
  margin-right: 5px;
  white-space: nowrap;
}
.words strong {
  margin-right: 14px;
  font-family: 'Noto Sans CJK SC', sans-serif;
  font-size: 29px;
  font-weight: 900;
  line-height: 34px;
  color: #a3dcb9;
}
.words span {
  font-size: 15px;
  line-height: 20px;
  color: #b4dcdc;
}
</style>
